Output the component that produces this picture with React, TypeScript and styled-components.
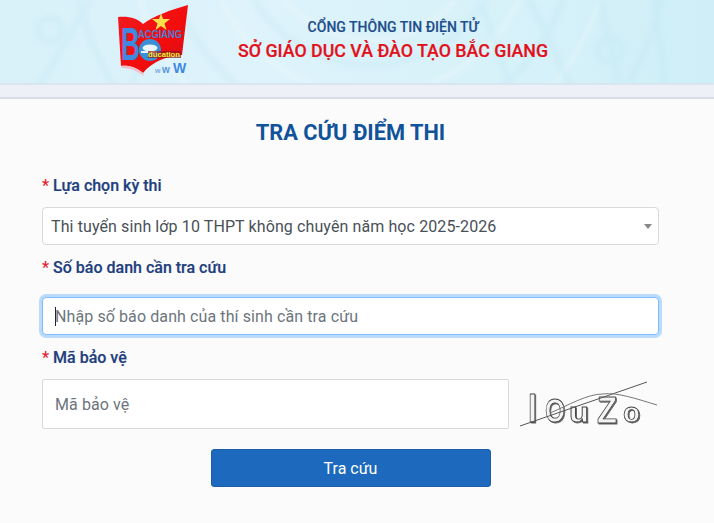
import React from "react";
import styled, { createGlobalStyle } from "styled-components";

const Global = createGlobalStyle`
  html, body { margin: 0; padding: 0; background: #fbfbfb; }
  body { font-family: Roboto, "Noto Sans", sans-serif; }
  * { box-sizing: border-box; }
`;

const Page = styled.div`
  width: 714px;
  height: 523px;
  overflow: hidden;
  background: #fbfbfb;
`;

const Header = styled.header`
  position: relative;
  height: 85px;
  display: flex;
  align-items: flex-start;
  padding-left: 116px;
  gap: 43px;
  background: linear-gradient(90deg, #d8f1f9 0%, #def3fb 35%, #d6f1f9 75%, #cfeef7 100%);
  border-bottom: 2px solid #d9e6ef;
  overflow: hidden;
`;

const Pattern = styled.svg`
  position: absolute;
  inset: 0;
  filter: blur(2px);
`;

const LogoMark = styled.svg`
  position: relative;
  flex: none;
  margin-top: 4px;
`;

const HeaderText = styled.div`
  position: relative;
  width: 320px;
  padding-top: 18px;
  text-align: center;
`;

const Portal = styled.div`
  font-size: 14px;
  line-height: 18px;
  font-weight: 500;
  color: #1f4f8c;
  -webkit-text-stroke: 0.15px #1f4f8c;
`;

const Dept = styled.div`
  margin-top: 4px;
  font-size: 17.8px;
  line-height: 22px;
  font-weight: 500;
  color: #e3101a;
  white-space: nowrap;
  -webkit-text-stroke: 0.2px #e3101a;
`;

const Strip = styled.div`
  height: 14px;
  background: #edf0f7;
  border-bottom: 2px solid #dcdce6;
`;

const Main = styled.main`
  position: relative;
  padding: 20px 55px 0 42px;
`;

const Title = styled.h1`
  margin: 0 0 27px;
  height: 28px;
  font-size: 21.8px;
  line-height: 28px;
  font-weight: 700;
  color: #11539b;
  text-align: center;
`;

const Label = styled.label`
  display: block;
  height: 22px;
  font-size: 16px;
  line-height: 24px;
  font-weight: 500;
  color: #1f3f7f;
  -webkit-text-stroke: 0.2px #1f3f7f;
`;

const Star = styled.span`
  color: #e3202a;
  margin-right: 4px;
  -webkit-text-stroke: 0;
`;

const SelectBox = styled.div`
  position: relative;
  height: 38px;
  margin: 11px 0 11px;
  padding-left: 8px;
  display: flex;
  align-items: center;
  background: #fff;
  border: 1px solid #d9d9d9;
  border-radius: 4px;
  font-size: 16px;
  letter-spacing: 0.105px;
  color: #495057;
  &::after {
    content: "";
    position: absolute;
    right: 6px;
    top: 16px;
    border-left: 4px solid transparent;
    border-right: 4px solid transparent;
    border-top: 5px solid #888;
  }
`;

const FocusedInput = styled.div`
  height: 38px;
  margin: 19px 0 11px;
  padding-left: 12px;
  display: flex;
  align-items: center;
  background: #fff;
  border: 1px solid #80bdff;
  border-radius: 4px;
  box-shadow: 0 0 0 3px rgba(0, 123, 255, 0.25);
  font-size: 16px;
  letter-spacing: 0.1px;
  color: #6c757d;
`;

const Caret = styled.span`
  width: 1px;
  height: 19px;
  margin-right: -1px;
  background: #222;
`;

const CaptchaRow = styled.div`
  display: flex;
  align-items: center;
  margin-top: 11px;
`;

const CaptchaInput = styled.div`
  width: 467px;
  height: 50px;
  padding-left: 12px;
  display: flex;
  align-items: center;
  background: #fff;
  border: 1px solid #d9d9d9;
  border-radius: 2px;
  font-size: 16px;
  letter-spacing: 0.1px;
  color: #6c757d;
`;

const Captcha = styled.svg`
  flex: none;
  margin-left: 10px;
`;

const CaptchaGlyphs = styled.g`
  font-family: "Liberation Sans", sans-serif;
  font-weight: 700;
  fill: #f4f4f4;
  stroke: #444;
  stroke-width: 0.8;
  filter: drop-shadow(1px 1px 0 #666);
`;

const ButtonRow = styled.div`
  display: flex;
  justify-content: center;
  margin-top: 20px;
`;

const Button = styled.button`
  width: 280px;
  height: 38px;
  border: 1px solid #1a5fa8;
  border-radius: 3px;
  background: #1c69bd;
  color: #fff;
  font-family: inherit;
  font-size: 16px;
  padding: 0;
`;

const LogoGlyph = styled.text`
  font-family: "Liberation Sans", sans-serif;
  font-weight: 700;
`;

const Logo = () => (
  <LogoMark width="74" height="74" viewBox="0 0 74 74">
    <defs>
      <linearGradient id="flag" x1="0" y1="0" x2="1" y2="1">
        <stop offset="0" stopColor="#f01c20" />
        <stop offset="0.6" stopColor="#f30c0c" />
        <stop offset="1" stopColor="#d01020" />
      </linearGradient>
    </defs>
    <path d="M2 13 C13 12 21 14 27 20 C38 12 54 6 72 1 L66 51 C50 52 36 58 27 69 C20 63 12 61 5 62 Z" fill="url(#flag)" />
    <path d="M5 62 C12 61 20 63 27 69 L28 72 C20 66 12 64 6 64 Z" fill="#efc0c8" />
    <polygon points="45,9 47,15 54,15 48.500,19.500 50.500,26 45,22 39.500,26 41.500,19.500 36,15 43,15" fill="#fbe04c" />
    <LogoGlyph x="5" y="56" fontSize="46" fill="#3f8ae0" textLength="19" lengthAdjust="spacingAndGlyphs">B</LogoGlyph>
    <LogoGlyph x="22" y="34" fontSize="11" fill="#4a7fd0" textLength="44" lengthAdjust="spacingAndGlyphs">ACGIANG</LogoGlyph>
    <circle cx="34" cy="46" r="11" fill="#3b8fd8" />
    <ellipse cx="34" cy="44" rx="7.500" ry="3.500" fill="#e8f6fa" />
    <rect x="25" y="47" width="16" height="2" fill="#e8f6fa" />
    <rect x="32" y="47" width="33" height="7" fill="#8f1a20" opacity="0.7" />
    <LogoGlyph x="32" y="53" fontSize="7" fill="#f2ee30" textLength="32" lengthAdjust="spacingAndGlyphs">ducation</LogoGlyph>
    <LogoGlyph x="39" y="69" fontSize="7" fill="#7aaadf">w</LogoGlyph>
    <LogoGlyph x="46" y="69" fontSize="10" fill="#5a96dc">w</LogoGlyph>
    <LogoGlyph x="57" y="69" fontSize="14" fill="#3f8ae0">W</LogoGlyph>
  </LogoMark>
);

const CaptchaArt = () => (
  <Captcha width="140" height="50" viewBox="0 0 140 50">
    <CaptchaGlyphs>
      <text x="9" y="43" fontSize="40" textLength="9" lengthAdjust="spacingAndGlyphs">I</text>
      <text x="26" y="43" fontSize="33" textLength="20" lengthAdjust="spacingAndGlyphs">O</text>
      <text x="50" y="43" fontSize="27" textLength="20" lengthAdjust="spacingAndGlyphs">u</text>
      <text x="78" y="44" fontSize="36" textLength="20" lengthAdjust="spacingAndGlyphs">Z</text>
      <text x="104" y="43" fontSize="28" textLength="17" lengthAdjust="spacingAndGlyphs">o</text>
    </CaptchaGlyphs>
    <path d="M1 47 L128 3" stroke="#555" strokeWidth="1" fill="none" />
    <path d="M31 34 C50 26 68 15 84 15 C98 13 118 20 138 26" stroke="#777" strokeWidth="1" fill="none" />
  </Captcha>
);

export default function App() {
  return (
    <Page>
      <Global />
      <Header>
        <Pattern width="714" height="85" viewBox="0 0 714 85" fill="none" strokeWidth="6">
          <g stroke="#ffffff" opacity="0.2">
            <circle cx="370" cy="-70" r="110" />
            <circle cx="370" cy="-70" r="165" />
            <circle cx="370" cy="-70" r="240" />
          </g>
          <g stroke="#b4deee" opacity="0.2">
            <circle cx="370" cy="-70" r="135" />
            <circle cx="370" cy="-70" r="205" />
            <circle cx="370" cy="-70" r="300" />
            <path d="M480 0 L510 85 M530 0 L570 85 M600 0 L620 85 M655 0 L665 85 M90 0 L40 85 M180 0 L130 85" />
            <circle cx="610" cy="50" r="12" />
            <circle cx="50" cy="30" r="12" />
          </g>
        </Pattern>
        <Logo />
        <HeaderText>
          <Portal>CỔNG THÔNG TIN ĐIỆN TỬ</Portal>
          <Dept>SỞ GIÁO DỤC VÀ ĐÀO TẠO BẮC GIANG</Dept>
        </HeaderText>
      </Header>
      <Strip />
      <Main>
        <Title>TRA CỨU ĐIỂM THI</Title>
        <Label><Star>*</Star>Lựa chọn kỳ thi</Label>
        <SelectBox>Thi tuyển sinh lớp 10 THPT không chuyên năm học 2025-2026</SelectBox>
        <Label><Star>*</Star>Số báo danh cần tra cứu</Label>
        <FocusedInput><Caret />Nhập số báo danh của thí sinh cần tra cứu</FocusedInput>
        <Label><Star>*</Star>Mã bảo vệ</Label>
        <CaptchaRow>
          <CaptchaInput>Mã bảo vệ</CaptchaInput>
          <CaptchaArt />
        </CaptchaRow>
        <ButtonRow><Button>Tra cứu</Button></ButtonRow>
      </Main>
    </Page>
  );
}
